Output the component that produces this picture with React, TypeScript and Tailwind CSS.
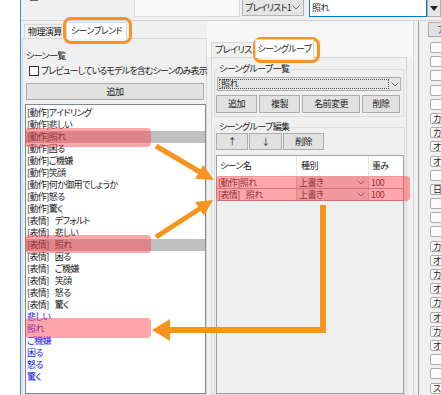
import React from "react";

const sceneItems: { pre?: string; name: string; blue?: boolean; sel?: boolean }[] = [
  { pre: "[動作]", name: "アイドリング" },
  { pre: "[動作]", name: "悲しい" },
  { pre: "[動作]", name: "照れ", sel: true },
  { pre: "[動作]", name: "困る" },
  { pre: "[動作]", name: "ご機嫌" },
  { pre: "[動作]", name: "笑顔" },
  { pre: "[動作]", name: "何か御用でしょうか" },
  { pre: "[動作]", name: "怒る" },
  { pre: "[動作]", name: "驚く" },
  { pre: "[表情]", name: "デフォルト" },
  { pre: "[表情]", name: "悲しい" },
  { pre: "[表情]", name: "照れ", sel: true },
  { pre: "[表情]", name: "困る" },
  { pre: "[表情]", name: "ご機嫌" },
  { pre: "[表情]", name: "笑顔" },
  { pre: "[表情]", name: "怒る" },
  { pre: "[表情]", name: "驚く" },
  { name: "悲しい", blue: true },
  { name: "照れ", blue: true },
  { name: "ご機嫌", blue: true },
  { name: "困る", blue: true },
  { name: "怒る", blue: true },
  { name: "驚く", blue: true },
];

const sideKeys = ["", "", "", "", "", "カ", "カ", "オ", "オ", "", "日", "", "", "", "カ", "オ", "カ", "オ", "カ", "オ", "カ", "オ", "", "", "ス"];

const groupRows = [
  { pre: "[動作]", name: "照れ" },
  { pre: "[表情]", name: "照れ" },
];

function Chevron() {
  return (
    <svg width="8" height="5" viewBox="0 0 8 5" className="shrink-0">
      <polyline points="0.5,0.5 4,4 7.5,0.5" fill="none" stroke="#606060" strokeWidth="1" />
    </svg>
  );
}

function Btn({ w, children }: { w: string; children: React.ReactNode }) {
  return (
    <div className={`${w} h-full bg-[#e1e1e1] border border-[#adadad] flex items-center justify-center whitespace-nowrap`}>
      {children}
    </div>
  );
}

export default function App() {
  const hl = "absolute pointer-events-none rounded-[4px] bg-[rgba(255,70,80,0.48)]";
  const box = "absolute pointer-events-none border-[3px] border-[#f7931e] rounded-[8px]";

  return (
    <div className="relative w-[441px] h-[395px] overflow-hidden bg-[#f0f0f0] flex text-[9px] leading-[12px] tracking-[-0.6px] text-[#1b1b1b] font-['Noto_Sans_CJK_JP','Noto_Sans',sans-serif] [font-feature-settings:'palt']">
      <div className="w-[21px] h-full shrink-0 bg-white border-r border-[#3c8de0]" />

      <div className="flex-1 flex flex-col min-w-0">
        {/* top bar */}
        <div className="h-[21px] shrink-0 border-b border-[#d4d4d4] flex items-start">
          <div className="ml-[9px] w-[8px] h-px bg-[#666]" />
          <div className="ml-[96px] w-[106px] h-[17px] bg-[#f9f9f9] border border-t-0 border-[#dadada]" />
          <div className="ml-[2px] w-[62px] h-[16px] bg-[#e5e5e5] border border-t-0 border-[#b5b5b5] flex items-center pl-[2px] pr-[3px]">
            <span className="whitespace-nowrap tracking-[-0.8px]">プレイリスト1</span>
            <span className="ml-auto">
              <Chevron />
            </span>
          </div>
          <div className="ml-[5px] w-[118px] h-[17px] bg-white border border-t-0 border-[#0078d7] flex items-center px-[2px]">
            照れ
          </div>
          <div className="w-[14px] h-[17px] bg-[#e6e6e6] border border-t-0 border-[#adadad] flex items-center justify-center">
            <div className="w-0 h-0 border-l-[4px] border-r-[4px] border-t-[5px] border-l-transparent border-r-transparent border-t-[#222]" />
          </div>
        </div>

        {/* body */}
        <div className="flex-1 flex min-h-0">
          {/* left tab control */}
          <div className="ml-[1px] w-[185px] shrink-0 flex flex-col">
            <div className="h-[17px] shrink-0 flex items-end">
              <div className="ml-[2px] w-[42px] h-[14px] bg-[#f0f0f0] border border-b-0 border-[#d9d9d9] px-[3px] leading-[13px] whitespace-nowrap">
                物理演算
              </div>
              <div className="relative z-10 -mb-px w-[61px] h-[17px] bg-white border border-b-0 border-[#d9d9d9] flex items-center justify-center whitespace-nowrap">
                シーンブレンド
              </div>
            </div>
            <div className="flex-1 min-h-0 border border-[#d9d9d9] bg-[#f0f0f0] flex flex-col">
              <div className="mt-[11px] ml-[3px] h-[12px]">シーン一覧</div>
              <div className="mt-[3px] ml-[6px] h-[12px] flex items-center">
                <div className="w-[10px] h-[10px] shrink-0 bg-white border border-[#333]" />
                <span className="ml-[2px] whitespace-nowrap tracking-[-0.85px]">プレビューしているモデルを含むシーンのみ表示</span>
              </div>
              <div className="mt-[6px] ml-[3px] w-[178px] h-[17px]">
                <Btn w="w-full">追加</Btn>
              </div>
              <div className="mt-[4px] ml-[2px] w-[181px] flex-1 min-h-0 bg-white border border-[#828790] pt-[2px] overflow-hidden">
                {sceneItems.map((it, i) => (
                  <div
                    key={i}
                    className={`h-[12px] pl-[1px] whitespace-nowrap ${it.sel ? "bg-[#c0c0c0]" : ""} ${it.blue ? "text-[#1414ff]" : ""}`}
                  >
                    {it.pre && <span>{it.pre}</span>}
                    <span className={it.pre === "[表情]" ? "ml-[6px]" : ""}>{it.name}</span>
                  </div>
                ))}
              </div>
            </div>
          </div>

          {/* right tab control */}
          <div className="w-[206px] shrink-0 flex flex-col">
            <div className="h-[36px] shrink-0 bg-[#f7f7f7] flex items-end pl-[4px]">
              <div className="w-[44px] h-[15px] bg-[#f0f0f0] border border-b-0 border-[#d9d9d9] pl-[3px] leading-[14px] whitespace-nowrap">
                プレイリスト
              </div>
              <div className="relative z-10 -mb-px w-[59px] h-[19px] bg-white border border-b-0 border-[#d9d9d9] flex items-center justify-center whitespace-nowrap">
                シーングループ
              </div>
            </div>
            <div className="ml-[4px] w-[196px] flex-1 min-h-0 border border-[#d9d9d9] bg-[#f0f0f0] flex flex-col">
              <fieldset className="mt-[5px] ml-[2px] w-[190px] border border-[#dcdcdc] rounded-[2px] pb-[3px]">
                <legend className="ml-[3px] px-[1px] leading-[12px]">シーングループ一覧</legend>
                <div className="mt-[2px] ml-[2px] w-[184px] h-[14px] bg-[#e5e5e5] border border-[#adadad] flex items-center">
                  <div className="ml-[1px] w-[170px] h-[10px] border border-dotted border-[#555] flex items-center pl-[1px] leading-[10px]">
                    照れ
                  </div>
                  <div className="flex-1 flex justify-center">
                    <Chevron />
                  </div>
                </div>
                <div className="mt-[4px] ml-[1px] h-[18px] flex gap-[2px]">
                  <Btn w="w-[41px]">追加</Btn>
                  <Btn w="w-[41px]">複製</Btn>
                  <Btn w="w-[58px]">名前変更</Btn>
                  <Btn w="w-[38px]">削除</Btn>
                </div>
              </fieldset>

              <fieldset className="mt-[4px] ml-[2px] w-[190px] flex-1 min-h-0 border border-[#dcdcdc] border-b-0 rounded-t-[2px] flex flex-col">
                <legend className="ml-[3px] px-[1px] leading-[12px]">シーングループ編集</legend>
                <div className="ml-[1px] h-[17px] flex gap-[1px]">
                  <Btn w="w-[32px]">↑</Btn>
                  <Btn w="w-[33px]">↓</Btn>
                  <Btn w="w-[41px]">削除</Btn>
                </div>
                <div className="mt-[5px] ml-[1px] w-[188px] flex-1 border border-[#a0a0a0] bg-[#f0f0f0] flex flex-col">
                  <div className="h-[21px] bg-white flex border-b border-[#e0e0e0]">
                    <div className="w-[80px] border-r border-[#e5e5e5] flex items-center pl-[3px]">シーン名</div>
                    <div className="w-[72px] border-r border-[#e5e5e5] flex items-center pl-[4px]">種別</div>
                    <div className="flex-1 flex items-center pl-[3px]">重み</div>
                  </div>
                  {groupRows.map((r, i) => (
                    <div key={i} className="h-[12px] flex border-b border-[#a0a0a0]">
                      <div className="w-[80px] bg-white border-r border-[#c8c8c8] pl-[1px] leading-[11px] whitespace-nowrap">
                        <span>{r.pre}</span>
                        <span className={r.pre === "[表情]" ? "ml-[6px]" : ""}>{r.name}</span>
                      </div>
                      <div className="w-[72px] bg-[#e4e4e4] border-r border-[#c8c8c8] flex items-center justify-between pl-[2px] pr-[3px] leading-[11px]">
                        <span>上書き</span>
                        <Chevron />
                      </div>
                      <div className="flex-1 bg-white pl-[2px] leading-[11px]">100</div>
                    </div>
                  ))}
                </div>
              </fieldset>
            </div>
          </div>

          {/* splitter */}
          <div className="w-[6px] shrink-0 border-l border-[#dadada] border-r border-r-[#a0a0a0]" />

          {/* right column */}
          <div className="flex-1 flex flex-col overflow-hidden border-l border-[#e8e8e8]">
            <div className="mt-[1px] ml-[8px] w-[20px] h-[15px] shrink-0 bg-[#e1e1e1] border border-[#adadad] pl-[8px] leading-[13px] whitespace-nowrap text-[#1a4f9c]">
              ア
            </div>
            <div className="mt-[5px] flex flex-col gap-[3.2px]">
              {sideKeys.map((k, i) => (
                <div
                  key={i}
                  className="ml-[10px] w-[20px] h-[11px] shrink-0 rounded-l-[2px] bg-[#fbfbfb] border border-[#adadad] pl-[2px] text-[9px] leading-[9px] whitespace-nowrap"
                >
                  {k}
                </div>
              ))}
            </div>
          </div>
        </div>
      </div>

      {/* annotations */}
      <div className={`${hl} left-[25px] top-[128px] w-[126px] h-[19px]`} />
      <div className={`${hl} left-[25px] top-[235px] w-[126px] h-[18px]`} />
      <div className={`${hl} left-[25px] top-[318px] w-[126px] h-[20px]`} />
      <div className={`${hl} left-[216px] top-[176px] w-[194px] h-[25px]`} />
      <div className={`${box} left-[63px] top-[17px] w-[69px] h-[27px]`} />
      <div className={`${box} left-[253px] top-[37px] w-[67px] h-[26px]`} />
      <svg className="absolute left-0 top-0 pointer-events-none" width="441" height="395">
        <g fill="#f7931e" stroke="#f7931e">
          <line x1="156" y1="146" x2="200" y2="172" strokeWidth="5" />
          <polygon points="214,180 203.3,165 195.1,178.8" stroke="none" />
          <line x1="156" y1="237" x2="200" y2="208.5" strokeWidth="5" />
          <polygon points="213,200 203.8,215.4 195.2,202" stroke="none" />
          <polyline points="323,205 323,330 168,330" fill="none" strokeWidth="6" />
          <polygon points="152,330 170,319 170,341" stroke="none" />
        </g>
      </svg>
    </div>
  );
}
